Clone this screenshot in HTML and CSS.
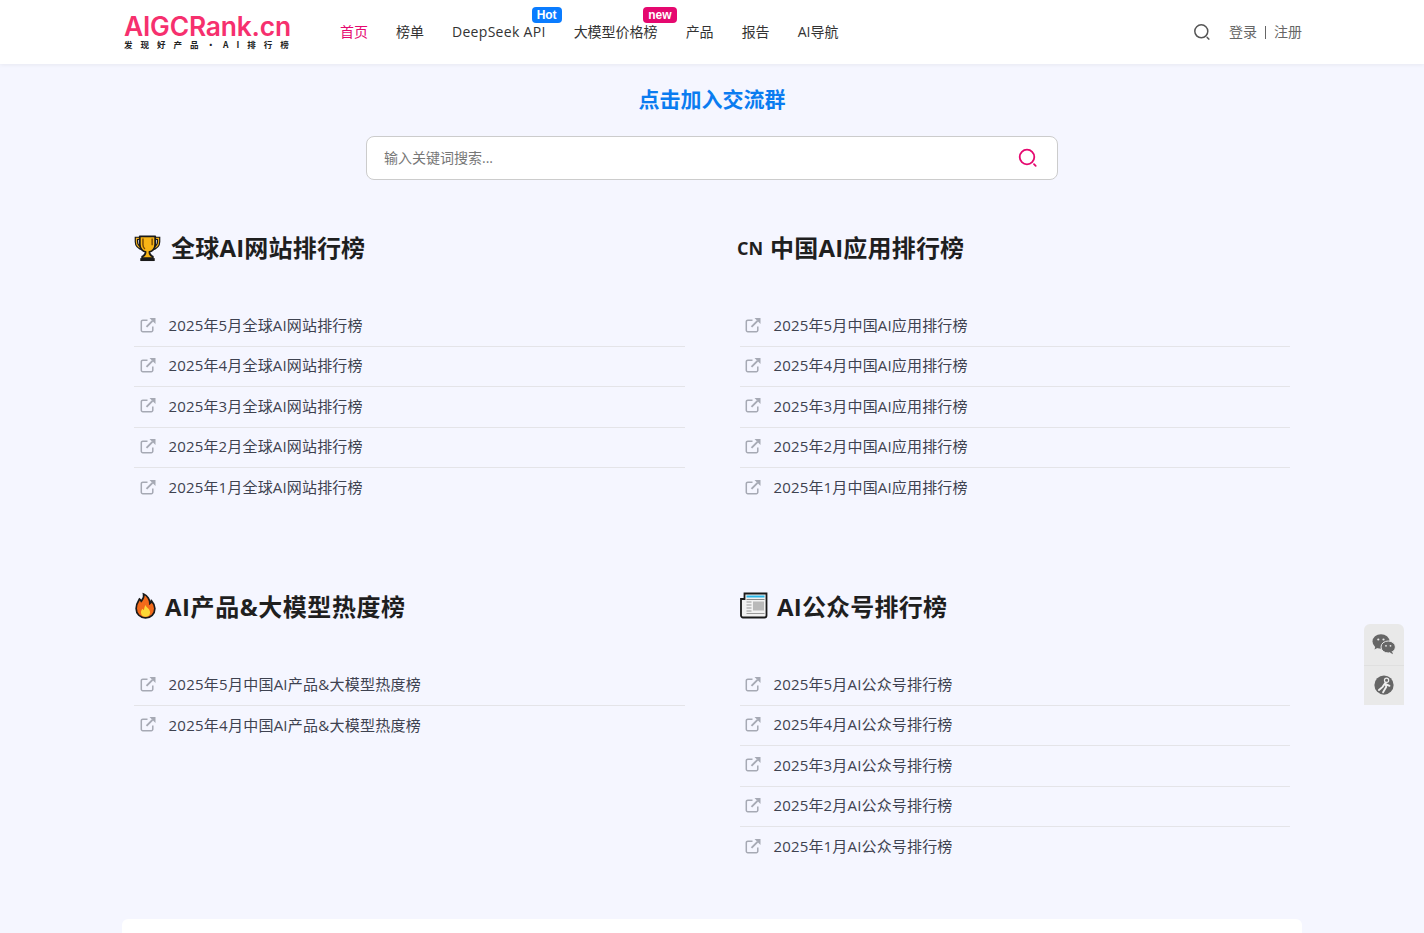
FILE: index.html
```html
<!DOCTYPE html>
<html lang="zh-CN">
<head>
<meta charset="utf-8">
<title>AIGCRank.cn</title>
<link rel="stylesheet" href="styles.css">
</head>
<body>
<svg class="defs" width="0" height="0" aria-hidden="true">
  <symbol id="ext" viewBox="0 0 16 16">
    <path d="M7.500 3.200H2.800A1.500 1.500 0 0 0 1.300 4.700v8.500a1.500 1.500 0 0 0 1.500 1.500h8.500a1.500 1.500 0 0 0 1.500-1.500V9.500" fill="none" stroke="currentColor" stroke-width="1.500"/>
    <path d="M6.500 9.800L12.500 3.800" fill="none" stroke="currentColor" stroke-width="1.900"/>
    <path d="M9.500 1h6v6z" fill="currentColor"/>
  </symbol>
</svg>
<header class="topbar">
  <div class="topbar-inner">
    <a class="logo" href="#">
      <span class="logo-main">AIGCRank.cn</span>
      <span class="logo-sub">发现好产品·AI排行榜</span>
    </a>
    <nav class="nav">
      <a class="nav-item active" href="#">首页</a>
      <a class="nav-item" href="#">榜单</a>
      <a class="nav-item nav-latin" href="#">DeepSeek API<span class="tag tag-hot">Hot</span></a>
      <a class="nav-item" href="#">大模型价格榜<span class="tag tag-new">new</span></a>
      <a class="nav-item" href="#">产品</a>
      <a class="nav-item" href="#">报告</a>
      <a class="nav-item" href="#">AI导航</a>
    </nav>
    <div class="account">
      <svg class="account-search" viewBox="0 0 18 18"><circle cx="8.300" cy="8.300" r="6.500" fill="none" stroke="#555" stroke-width="1.500"/><path d="M14.200 14.400l1.600 1.700" stroke="#555" stroke-width="1.500" stroke-linecap="round"/></svg>
      <a href="#">登录</a><i class="sep"></i><a href="#">注册</a>
    </div>
  </div>
</header>

<main class="page">
  <a class="join" href="#">点击加入交流群</a>
  <div class="search">
    <span class="search-ph">输入关键词搜索...</span>
    <svg class="search-icon" viewBox="0 0 20 20"><circle cx="9" cy="9" r="7.300" fill="none" stroke="#e5086f" stroke-width="1.800"/><path d="M16 16.200l1.700 1.700" stroke="#e5086f" stroke-width="1.800" stroke-linecap="round"/></svg>
  </div>

  <div class="boards">
    <section class="board">
      <h2 class="board-title">
        <svg class="emoji trophy" viewBox="0 0 28 28">
          <path d="M6 3.500H2.500v3.500c0 4 3 6.500 7.500 7.500M22 3.500h3.500v3.500c0 4-3 6.500-7.500 7.500" fill="none" stroke="#1a1a1a" stroke-width="3.600"/>
          <path d="M6 3.500H2.500v3.500c0 4 3 6.500 7.500 7.500M22 3.500h3.500v3.500c0 4-3 6.500-7.500 7.500" fill="none" stroke="#f7b21b" stroke-width="1.100"/>
          <path d="M6 1.500h16v8c0 4.500-3 7.500-6 8 0 2.500 1 4 3.500 5v1.500h-11V22.500c2.500-1 3.500-2.500 3.500-5-3-.5-6-3.500-6-8z" fill="#f9b515" stroke="#1a1a1a" stroke-width="1.900" stroke-linejoin="round"/>
          <path d="M9.300 3.500v6.500c0 2 .7 3.300 2 4.500M18.800 3.500v7" stroke="#7a4a05" stroke-width="1.500" fill="none"/>
          <path d="M6.500 24h15v3h-15z" fill="#1a1a1a"/>
        </svg>
        全球AI网站排行榜
      </h2>
      <ul class="rank">
        <li><a href="#"><svg class="ext"><use href="#ext"/></svg>2025年5月全球AI网站排行榜</a></li>
        <li><a href="#"><svg class="ext"><use href="#ext"/></svg>2025年4月全球AI网站排行榜</a></li>
        <li><a href="#"><svg class="ext"><use href="#ext"/></svg>2025年3月全球AI网站排行榜</a></li>
        <li><a href="#"><svg class="ext"><use href="#ext"/></svg>2025年2月全球AI网站排行榜</a></li>
        <li><a href="#"><svg class="ext"><use href="#ext"/></svg>2025年1月全球AI网站排行榜</a></li>
      </ul>
    </section>
    <section class="board">
      <h2 class="board-title"><span class="cn">CN</span>中国AI应用排行榜</h2>
      <ul class="rank">
        <li><a href="#"><svg class="ext"><use href="#ext"/></svg>2025年5月中国AI应用排行榜</a></li>
        <li><a href="#"><svg class="ext"><use href="#ext"/></svg>2025年4月中国AI应用排行榜</a></li>
        <li><a href="#"><svg class="ext"><use href="#ext"/></svg>2025年3月中国AI应用排行榜</a></li>
        <li><a href="#"><svg class="ext"><use href="#ext"/></svg>2025年2月中国AI应用排行榜</a></li>
        <li><a href="#"><svg class="ext"><use href="#ext"/></svg>2025年1月中国AI应用排行榜</a></li>
      </ul>
    </section>
    <section class="board">
      <h2 class="board-title title-wide">
        <svg class="emoji fire" viewBox="0 0 22 28">
          <path d="M9 1.500c1 4-1 5.500-2.500 7.500-.5-1-1-1.800-1.800-2.300C3 9.500 1.200 12 1.200 16.500c0 5.800 4.300 10 9.800 10s9.800-4 9.800-9.800c0-3.700-1.700-6-3.500-8-.2 1.300-.7 2.200-1.700 2.800C15.800 7.500 13 3 9 1.500z" fill="#f26a1b" stroke="#1a1a1a" stroke-width="1.800"/>
          <path d="M11 13c.5 2.500 4.800 3.800 4.800 7.800 0 2.800-2.200 4.500-4.800 4.500s-4.800-1.700-4.800-4.500c0-2 1-3.300 2-4 .2.800.6 1.300 1.200 1.500.2-2 .6-3.500 1.600-5.300z" fill="#fdd835"/>
        </svg>
        AI产品&amp;大模型热度榜
      </h2>
      <ul class="rank rank-wide">
        <li><a href="#"><svg class="ext"><use href="#ext"/></svg>2025年5月中国AI产品&amp;大模型热度榜</a></li>
        <li><a href="#"><svg class="ext"><use href="#ext"/></svg>2025年4月中国AI产品&amp;大模型热度榜</a></li>
      </ul>
    </section>
    <section class="board">
      <h2 class="board-title">
        <svg class="emoji news" viewBox="0 0 28 28">
          <path d="M4.500 2.500h22v22a2 2 0 0 1-2 2H3a2 2 0 0 1-2-2V8h3.500z" fill="#f1f1f1" stroke="#1a1a1a" stroke-width="1.800"/>
          <path d="M6.500 5.500h18" stroke="#29b6e8" stroke-width="2"/>
          <path d="M6.500 8.500h18" stroke="#8a8a8a" stroke-width="1"/>
          <path d="M13 10.500h11v9H13z" fill="#b9b9b9"/>
          <path d="M6.500 11h5M6.500 14h5M6.500 17h5M6.500 20h5M6.500 22.500h18" stroke="#9a9a9a" stroke-width="1.100"/>
        </svg>
        AI公众号排行榜
      </h2>
      <ul class="rank">
        <li><a href="#"><svg class="ext"><use href="#ext"/></svg>2025年5月AI公众号排行榜</a></li>
        <li><a href="#"><svg class="ext"><use href="#ext"/></svg>2025年4月AI公众号排行榜</a></li>
        <li><a href="#"><svg class="ext"><use href="#ext"/></svg>2025年3月AI公众号排行榜</a></li>
        <li><a href="#"><svg class="ext"><use href="#ext"/></svg>2025年2月AI公众号排行榜</a></li>
        <li><a href="#"><svg class="ext"><use href="#ext"/></svg>2025年1月AI公众号排行榜</a></li>
      </ul>
    </section>
  </div>
  <div class="footer-card"></div>
</main>

<aside class="side">
  <a class="side-btn" href="#">
    <svg viewBox="0 0 24 24" width="24" height="24">
      <ellipse cx="9" cy="9.500" rx="8.500" ry="7.300" fill="#666"/>
      <path d="M3.500 14l-1 3.500 3.800-2z" fill="#666"/>
      <ellipse cx="16.200" cy="15" rx="7.200" ry="6" fill="#666" stroke="#e9e9e9" stroke-width="1"/>
      <path d="M20 19.500l1 2.800-3.200-1.800z" fill="#666"/>
      <circle cx="6.300" cy="7.500" r="1.100" fill="#e9e9e9"/><circle cx="11.500" cy="7.500" r="1.100" fill="#e9e9e9"/>
      <circle cx="14" cy="13.800" r=".9" fill="#e9e9e9"/><circle cx="18.500" cy="13.800" r=".9" fill="#e9e9e9"/>
    </svg>
  </a>
  <a class="side-btn" href="#">
    <svg viewBox="0 0 24 24" width="22" height="22">
      <circle cx="12" cy="12" r="10.500" fill="#666"/>
      <circle cx="14.800" cy="6.800" r="2.300" fill="none" stroke="#eee" stroke-width="1.300"/>
      <path d="M13.500 9.500l-3 4.500-4 3.500M13.500 10l1 4-3.500 6M13 10.500l5 2.500" fill="none" stroke="#eee" stroke-width="2" stroke-linecap="round"/>
    </svg>
  </a>
</aside>
</body>
</html>
```
FILE: styles.css
```css
* { box-sizing: border-box; }
html, body { margin: 0; padding: 0; }
body {
  background: #f5f6ff;
  color: #333;
  font-family: "Open Sans", "Noto Sans CJK SC", sans-serif;
  font-size: 14px;
  height: 933px;
  overflow: hidden;
}
a { color: inherit; text-decoration: none; }
.defs { position: absolute; }

.topbar {
  height: 64px;
  background: #fff;
  box-shadow: 0 1px 4px rgba(0, 0, 0, .06);
}
.topbar-inner {
  width: 1180px;
  height: 64px;
  margin: 0 auto;
  display: flex;
  align-items: center;
}
.logo {
  width: 218px;
  padding-left: 2px;
  display: flex;
  flex-direction: column;
  margin-top: -2px;
}
.logo-main {
  font-family: Inter, "Liberation Sans", sans-serif;
  font-weight: 600;
  font-size: 26.400px;
  line-height: 26px;
  letter-spacing: -.2px;
  color: #f6306e;
}
.logo-sub {
  font-family: "Noto Sans CJK SC", sans-serif;
  font-weight: 700;
  font-size: 8.500px;
  line-height: 10px;
  letter-spacing: 8px;
  color: #222;
  white-space: nowrap;
}
.nav {
  display: flex;
  gap: 28px;
  flex: 1;
}
.nav-item {
  position: relative;
  line-height: 22px;
  color: #333;
}
.nav-latin { letter-spacing: .3px; }
.nav-item.active { color: #e5086f; }
.tag {
  position: absolute;
  top: -14px;
  height: 16px;
  padding: 0 5px;
  border-radius: 4px;
  color: #fff;
  font-family: "Liberation Sans", sans-serif;
  font-size: 12px;
  font-weight: 700;
  line-height: 17px;
  letter-spacing: 0;
}
.tag-hot { background: #0a7cff; right: -16px; }
.tag-new { background: #e5086f; right: -19px; }
.account {
  display: flex;
  align-items: center;
  line-height: 22px;
  color: #666;
}
.account-search { width: 18px; height: 18px; margin-right: 18px; }
.sep { width: 1px; height: 13px; background: #666; margin: 0 8px; }

.page {
  width: 1180px;
  margin: 0 auto;
}
.join {
  display: block;
  margin-top: 19px;
  text-align: center;
  color: #0a7cf0;
  font-size: 21px;
  font-weight: 700;
  line-height: 32px;
}
.search {
  width: 692px;
  height: 44px;
  margin: 21px auto 0;
  padding: 0 19px 0 17px;
  display: flex;
  align-items: center;
  justify-content: space-between;
  background: #fff;
  border: 1px solid #ccc;
  border-radius: 8px;
}
.search-ph { color: #777; font-size: 14px; line-height: 20px; }
.search-icon { width: 20px; height: 20px; }

.boards {
  display: grid;
  grid-template-columns: 551px 550px;
  grid-template-rows: 359px 334px;
  column-gap: 55px;
  padding: 46px 0 0 12px;
}
.board-title {
  display: flex;
  align-items: center;
  height: 40px;
  margin: 0 0 40.400px;
  color: #1f1f1f;
  font-size: 24px;
  font-weight: 700;
  letter-spacing: .2px;
}
.title-wide { letter-spacing: .55px; }
.emoji { flex: none; }
.trophy { width: 27px; height: 27px; margin: 4px 10px 0 0; }
.fire { width: 21px; height: 28px; margin: 2px 9px 0 1px; }
.news { width: 28px; height: 28px; margin-right: 9px; }
.cn { font-size: 18px; margin: 4px 9px 0 -3px; width: 24px; letter-spacing: 0; }
.rank { list-style: none; margin: 0; padding: 0; }
.rank li {
  height: 40.400px;
  border-bottom: 1px solid #e4e4e8;
}
.rank li:last-child { border-bottom: 0; }
.rank a {
  display: flex;
  align-items: center;
  height: 100%;
  padding: 0 0 3px 6px;
  font-size: 15px;
  letter-spacing: .16px;
  color: #3e4250;
}
.board:nth-child(even) .rank a { padding-left: 5px; }
.rank-wide a { letter-spacing: .25px; }
.ext {
  width: 16px;
  height: 16px;
  margin-right: 12.500px;
  color: #a6a9b4;
}
.footer-card {
  height: 14px;
  background: #fff;
  border-radius: 6px 6px 0 0;
}
.side {
  position: fixed;
  left: 1364px;
  top: 624px;
  width: 40px;
  background: #e9e9e9;
  border-radius: 6px 6px 0 0;
}
.side-btn {
  height: 40.500px;
  display: flex;
  align-items: center;
  justify-content: center;
}
.side-btn + .side-btn { border-top: 1px solid #e0e0e0; }
```
